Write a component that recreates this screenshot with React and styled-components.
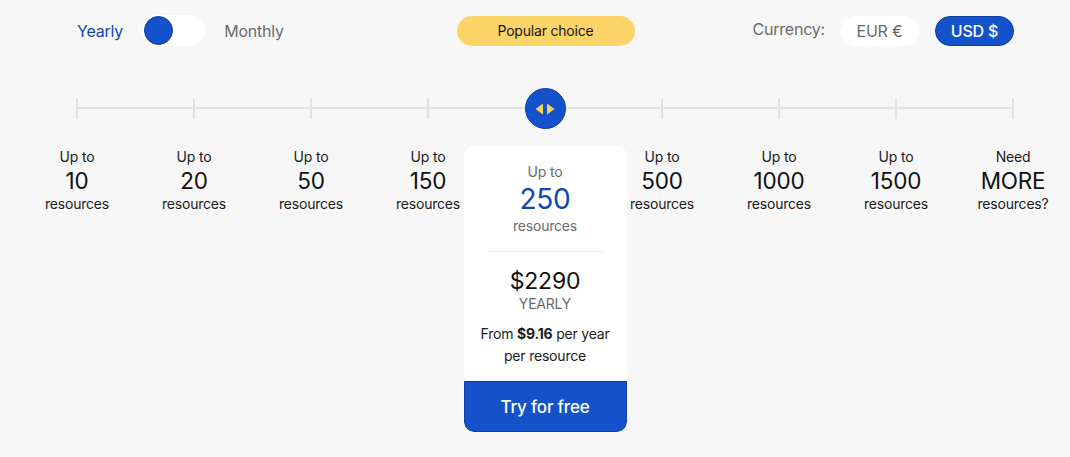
import React, { useState } from "react";
import styled, { createGlobalStyle } from "styled-components";

const GlobalStyle = createGlobalStyle`
  html, body {
    margin: 0;
    padding: 0;
    background: #f7f7f7;
    overflow: hidden;
  }
  body {
    font-family: Inter, "Noto Sans", "Liberation Sans", sans-serif;
    color: #161616;
    letter-spacing: -0.2px;
  }
`;

const BLUE = "#1452cc";
const BLUE_TEXT = "#0f46b3";

const plans = [
  { top: "Up to", value: "10", bottom: "resources" },
  { top: "Up to", value: "20", bottom: "resources" },
  { top: "Up to", value: "50", bottom: "resources" },
  { top: "Up to", value: "150", bottom: "resources" },
  { top: "Up to", value: "250", bottom: "resources", price: "$2290", perResource: "$9.16" },
  { top: "Up to", value: "500", bottom: "resources" },
  { top: "Up to", value: "1000", bottom: "resources" },
  { top: "Up to", value: "1500", bottom: "resources" },
  { top: "Need", value: "MORE", bottom: "resources?" },
];

const App = () => {
  const [yearly, setYearly] = useState(true);
  const [currency, setCurrency] = useState("USD");
  const selected = 4;

  return (
    <Page>
      <GlobalStyle />
      <TopBar>
        <BillingGroup>
          <BillingLabel $active={yearly} onClick={() => setYearly(true)}>Yearly</BillingLabel>
          <Toggle $on={!yearly} onClick={() => setYearly(!yearly)}>
            <ToggleKnob />
          </Toggle>
          <BillingLabel $active={!yearly} onClick={() => setYearly(false)}>Monthly</BillingLabel>
        </BillingGroup>
        <PopularBadge>Popular choice</PopularBadge>
        <CurrencyGroup>
          <CurrencyLabel>Currency:</CurrencyLabel>
          <CurrencyPill $active={currency === "EUR"} onClick={() => setCurrency("EUR")}>EUR €</CurrencyPill>
          <CurrencyPill $active={currency === "USD"} onClick={() => setCurrency("USD")}>USD $</CurrencyPill>
        </CurrencyGroup>
      </TopBar>

      <PlanGrid>
        <Track>
          {plans.map((p) => (
            <TickCell key={p.value}>
              <Tick />
            </TickCell>
          ))}
        </Track>
        <Knob $col={selected + 1}>
          <svg width="22" height="12" viewBox="0 0 22 12">
            <polygon points="9,0.5 9,11.5 1.5,6" fill="#f7d154" />
            <polygon points="13,0.5 13,11.5 20.5,6" fill="#f7d154" />
          </svg>
        </Knob>

        {plans.map((p, i) =>
          i === selected ? (
            <Card key={p.value}>
              <CardTop>
                <CardSmall>{p.top}</CardSmall>
                <CardValue>{p.value}</CardValue>
                <CardSmall>{p.bottom}</CardSmall>
              </CardTop>
              <Divider />
              <Price>{p.price}</Price>
              <Period>YEARLY</Period>
              <PerResource>
                From <b>{p.perResource}</b> per year
                <br />
                per resource
              </PerResource>
              <TryButton>Try for free</TryButton>
            </Card>
          ) : (
            <PlanLabel key={p.value}>
              <SmallText>{p.top}</SmallText>
              <ValueText>{p.value}</ValueText>
              <SmallText>{p.bottom}</SmallText>
            </PlanLabel>
          )
        )}
      </PlanGrid>
    </Page>
  );
};

export default App;

const Page = styled.div`
  width: 1070px;
  height: 457px;
  padding-left: 18.5px;
  padding-top: 15px;
  box-sizing: border-box;
`;

const TopBar = styled.div`
  width: 937px;
  margin-left: 58.5px;
  height: 30px;
  display: grid;
  grid-template-columns: 1fr auto 1fr;
  align-items: center;
`;

const BillingGroup = styled.div`
  display: flex;
  align-items: center;
  gap: 19px;
`;

const BillingLabel = styled.span`
  font-size: 16px;
  color: ${(p) => (p.$active ? BLUE_TEXT : "#6b6b6b")};
  cursor: pointer;
`;

const Toggle = styled.div`
  width: 63px;
  height: 31px;
  border-radius: 16px;
  background: #fff;
  box-sizing: border-box;
  padding: 1px 2px;
  display: flex;
  align-items: center;
  justify-content: ${(p) => (p.$on ? "flex-end" : "flex-start")};
  cursor: pointer;
`;

const ToggleKnob = styled.div`
  width: 29px;
  height: 29px;
  border-radius: 50%;
  background: ${BLUE};
  box-sizing: border-box;
  border: 1px solid #0c3f9f;
`;

const PopularBadge = styled.div`
  width: 178px;
  height: 30px;
  border-radius: 15px;
  background: #fdd468;
  display: flex;
  align-items: center;
  justify-content: center;
  font-size: 14px;
  font-weight: 400;
  color: #141414;
`;

const CurrencyGroup = styled.div`
  display: flex;
  align-items: center;
  justify-content: flex-end;
  gap: 16px;
`;

const CurrencyLabel = styled.span`
  font-size: 16px;
  color: #6b6b6b;
  margin-right: -1px;
  margin-top: -4px;
`;

const CurrencyPill = styled.button`
  width: 79px;
  height: 30px;
  border-radius: 15px;
  box-sizing: border-box;
  border: 1px solid ${(p) => (p.$active ? "#0c3f9f" : "#fff")};
  background: ${(p) => (p.$active ? BLUE : "#fff")};
  color: ${(p) => (p.$active ? "#fff" : "#6b6b6b")};
  font-family: inherit;
  letter-spacing: inherit;
  font-size: 16px;
  font-weight: ${(p) => (p.$active ? 500 : 400)};
  padding: 0;
  cursor: pointer;
`;

const PlanGrid = styled.div`
  margin-top: 43px;
  display: grid;
  grid-template-columns: repeat(9, 117px);
  grid-template-rows: 40px auto;
  row-gap: 18px;
`;

const Track = styled.div`
  grid-column: 1 / -1;
  grid-row: 1;
  display: grid;
  grid-template-columns: repeat(9, 117px);
  align-items: center;
  background: linear-gradient(#e2e2e2, #e2e2e2) center / calc(100% - 117px) 2px no-repeat;
`;

const TickCell = styled.div`
  display: flex;
  justify-content: center;
`;

const Tick = styled.div`
  width: 2px;
  height: 21px;
  background: #e2e2e2;
`;

const Knob = styled.div`
  grid-column: ${(p) => p.$col};
  grid-row: 1;
  justify-self: center;
  width: 41px;
  height: 41px;
  border-radius: 50%;
  background: ${BLUE};
  border: 1px solid #0c3f9f;
  box-sizing: border-box;
  display: flex;
  align-items: center;
  justify-content: center;
  z-index: 1;
`;

const PlanLabel = styled.div`
  grid-row: 2;
  padding-top: 1px;
  display: flex;
  flex-direction: column;
  align-items: center;
  text-align: center;
`;

const SmallText = styled.div`
  font-size: 14px;
  line-height: 20px;
  color: #1a1a1a;
`;

const ValueText = styled.div`
  font-size: 22.5px;
  line-height: 27px;
  color: #111;
`;

const Card = styled.div`
  grid-row: 2;
  justify-self: center;
  width: 163px;
  background: #fff;
  border-radius: 10px;
  display: flex;
  flex-direction: column;
  align-items: center;
  text-align: center;
  overflow: hidden;
`;

const CardTop = styled.div`
  padding-top: 16px;
  display: flex;
  flex-direction: column;
  align-items: center;
`;

const CardSmall = styled.div`
  font-size: 14px;
  line-height: 20px;
  color: #6b6b6b;
`;

const CardValue = styled.div`
  font-size: 28px;
  line-height: 34px;
  color: ${BLUE_TEXT};
`;

const Divider = styled.div`
  width: 114px;
  height: 1px;
  background: #ebebeb;
  margin-top: 15px;
`;

const Price = styled.div`
  margin-top: 15px;
  font-size: 23px;
  line-height: 28px;
  color: #111;
`;

const Period = styled.div`
  font-size: 14px;
  line-height: 18px;
  color: #6b6b6b;
`;

const PerResource = styled.div`
  margin-top: 10px;
  font-size: 14px;
  line-height: 22px;
  color: #1a1a1a;
  b {
    font-weight: 700;
  }
`;

const TryButton = styled.button`
  margin-top: 14px;
  width: 100%;
  height: 51px;
  border: 1px solid #0c3f9f;
  border-radius: 0 0 10px 10px;
  background: ${BLUE};
  color: #fff;
  font-family: inherit;
  letter-spacing: inherit;
  font-size: 17px;
  font-weight: 500;
  cursor: pointer;
`;
